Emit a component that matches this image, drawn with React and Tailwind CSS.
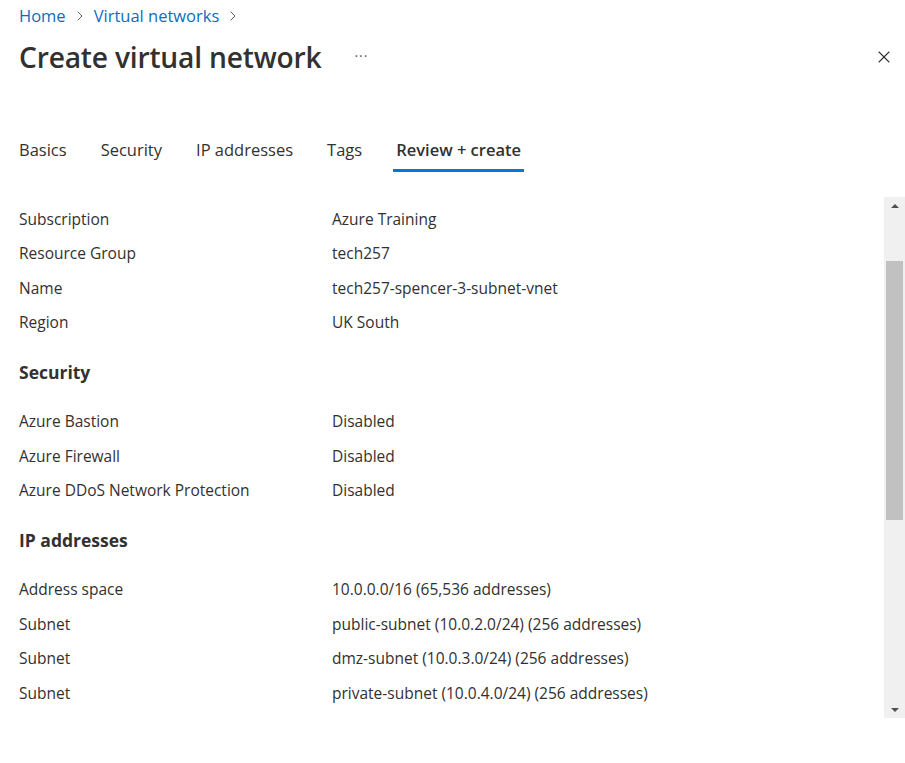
import { ChevronRight, X } from "lucide-react";

const sections = [
  {
    title: null,
    rows: [
      ["Subscription", "Azure Training"],
      ["Resource Group", "tech257"],
      ["Name", "tech257-spencer-3-subnet-vnet"],
      ["Region", "UK South"],
    ],
  },
  {
    title: "Security",
    rows: [
      ["Azure Bastion", "Disabled"],
      ["Azure Firewall", "Disabled"],
      ["Azure DDoS Network Protection", "Disabled"],
    ],
  },
  {
    title: "IP addresses",
    rows: [
      ["Address space", "10.0.0.0/16 (65,536 addresses)"],
      ["Subnet", "public-subnet (10.0.2.0/24) (256 addresses)"],
      ["Subnet", "dmz-subnet (10.0.3.0/24) (256 addresses)"],
      ["Subnet", "private-subnet (10.0.4.0/24) (256 addresses)"],
      ["NAT gateway", "Disabled"],
    ],
  },
];

const tabs = ["Basics", "Security", "IP addresses", "Tags", "Review + create"];

export default function App() {
  return (
    <div className="w-[905px] h-[763px] bg-white text-[#323130] overflow-hidden font-['Open_Sans',sans-serif]">
      {/* header */}
      <div className="pl-[19px] pr-[12px]">
        <div className="flex items-center h-[32px] text-[16.5px] text-[#0f6cbd]">
          <span>Home</span>
          <ChevronRight className="w-4 h-4 mx-[6px] text-[#605e5c]" strokeWidth={1.5} />
          <span>Virtual networks</span>
          <ChevronRight className="w-4 h-4 mx-[6px] text-[#605e5c]" strokeWidth={1.5} />
        </div>
        <div className="flex items-center h-[50px]">
          <h1 className="text-[28.2px] font-semibold tracking-[-0.2px]">Create virtual network</h1>
          <span className="ml-[33px] text-[14px] text-[#605e5c] tracking-[1px] -mt-[4px]">···</span>
          <X className="ml-auto w-[20px] h-[20px] text-[#323130] -mr-[1px]" strokeWidth={1.3} />
        </div>
      </div>

      {/* tabs */}
      <div className="flex gap-[34px] pl-[19px] mt-[50px] text-[16.5px]">
        {tabs.map((t, i) => {
          const active = i === tabs.length - 1;
          return (
            <div key={t} className={"h-[40px] flex items-center border-b-[3px] " + (active ? "border-[#0078d4] font-semibold px-[3px] -ml-[3px]" : "border-transparent")}>
              {t}
            </div>
          );
        })}
      </div>

      {/* scroll area */}
      <div className="flex mt-[25px] h-[523px]">
        <div className="flex-1 overflow-hidden pt-[5px] pl-[19px] text-[15.5px]">
          {sections.map((s, si) => (
            <div key={si}>
              {s.title && (
                <div className="h-[64.5px] flex items-center text-[17.5px] font-bold">{s.title}</div>
              )}
              {s.rows.map(([k, v], ri) => (
                <div key={ri} className="h-[34.5px] flex items-center">
                  <div className="w-[313px]">{k}</div>
                  <div>{v}</div>
                </div>
              ))}
            </div>
          ))}
        </div>
        <div className="w-[21px] h-[521px] bg-[#f0f0f0] flex flex-col items-center">
          <div className="h-[17px] flex items-center justify-center">
            <div className="w-0 h-0 border-l-[4px] border-r-[4px] border-b-[4px] border-l-transparent border-r-transparent border-b-[#505050]" />
          </div>
          <div className="h-[47px]" />
          <div className="w-[17px] h-[259px] bg-[#c1c1c1]" />
          <div className="flex-1" />
          <div className="h-[17px] flex items-center justify-center">
            <div className="w-0 h-0 border-l-[4px] border-r-[4px] border-t-[4px] border-l-transparent border-r-transparent border-t-[#505050]" />
          </div>
        </div>
      </div>
    </div>
  );
}
